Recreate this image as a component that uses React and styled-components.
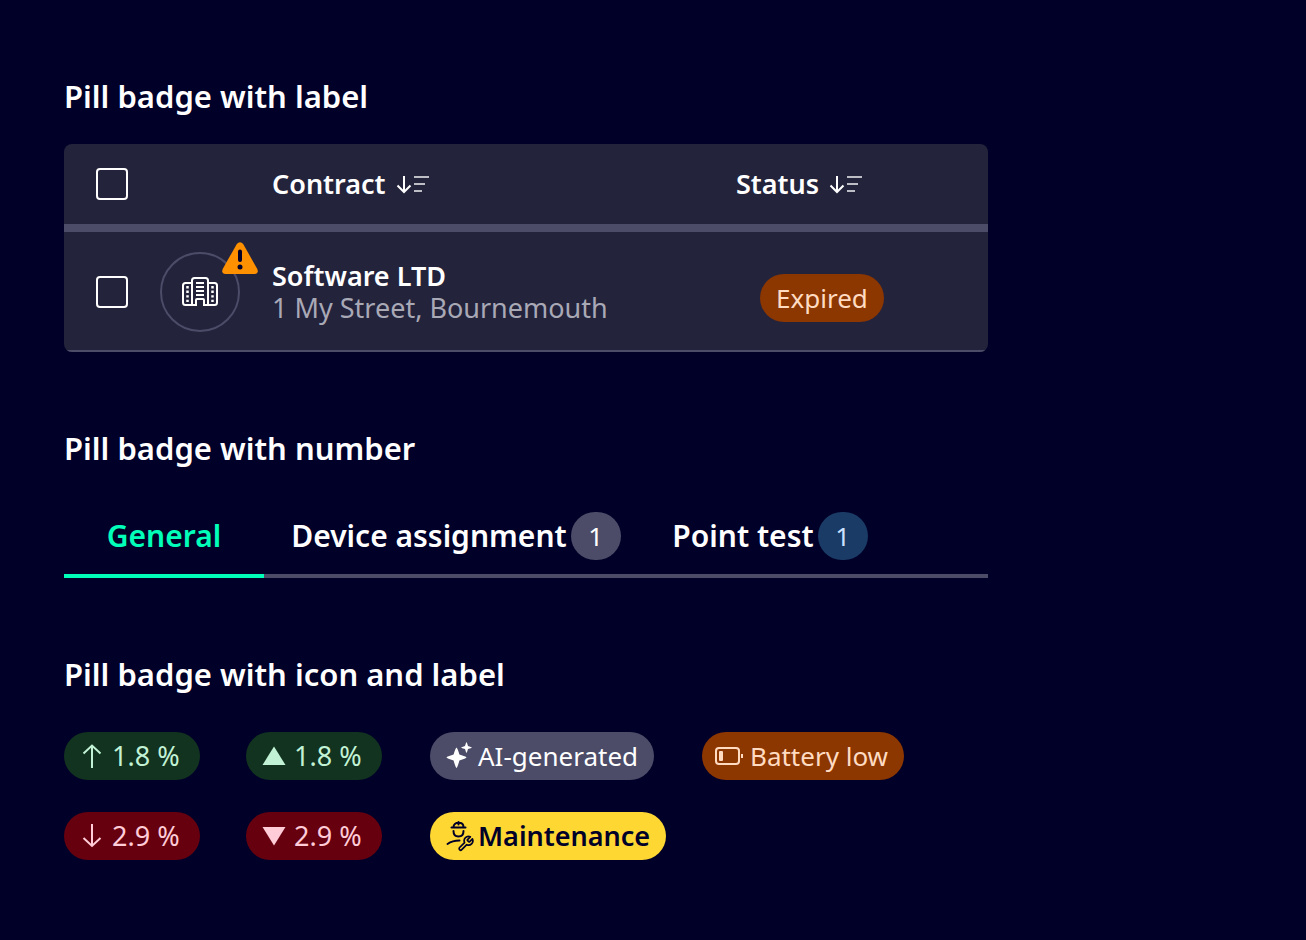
import React from "react";
import styled, { createGlobalStyle, css } from "styled-components";

const Global = createGlobalStyle`
  *, *::before, *::after { box-sizing: border-box; }
  body {
    margin: 0;
    background: #000028;
    color: #ffffff;
    font-family: "Noto Sans", "Open Sans", sans-serif;
    font-size: 27px;
    line-height: 32px;
  }
  button {
    font: inherit;
    color: inherit;
    background: none;
    border: 0;
    padding: 0;
    cursor: pointer;
  }
`;

const Page = styled.main`
  display: flex;
  flex-direction: column;
  gap: 76px;
  max-width: 1052px;
  padding: 76px 64px 80px;
`;

const Section = styled.section`
  display: flex;
  flex-direction: column;
  gap: ${(p) => p.$gap}px;
`;

const Heading = styled.h2`
  margin: 0;
  font-size: 31px;
  line-height: 40px;
  font-weight: 600;
`;

const Card = styled.div`
  background: #23233c;
  border-radius: 8px;
  overflow: hidden;
`;

const Table = styled.table`
  width: 100%;
  border-collapse: separate;
  border-spacing: 0;
  table-layout: fixed;
`;

const Col = styled.col`
  width: ${(p) => p.$width};
`;

const HeadCell = styled.th`
  height: 88px;
  padding: 0;
  border-bottom: 8px solid #4c4c68;
  text-align: left;
  font-weight: 600;
`;

const Cell = styled.td`
  height: 120px;
  padding: ${(p) => p.$pad || "2px 0 0"};
  border-bottom: 2px solid #4c4c68;
  vertical-align: middle;
`;

const Checkbox = styled.input.attrs({ type: "checkbox" })`
  appearance: none;
  display: block;
  width: 32px;
  height: 32px;
  margin: 0 0 0 32px;
  border: 2px solid #ffffff;
  border-radius: 4px;
  &:checked { background: #00ffb9; }
`;

const SortButton = styled.button`
  display: flex;
  align-items: center;
  gap: 10px;
`;

const Avatar = styled.div`
  position: relative;
  display: flex;
  align-items: center;
  justify-content: center;
  width: 80px;
  height: 80px;
  border: 2px solid #4c4c68;
  border-radius: 50%;
`;

const AlertMark = styled.span`
  position: absolute;
  top: -12px;
  right: -20px;
  display: flex;
`;

const Name = styled.div`
  font-weight: 600;
`;

const Address = styled.div`
  color: #a9a9b6;
`;

const tones = {
  warning: css`background: #8c3600; color: #ffdbc2;`,
  success: css`background: #12331f; color: #c2f2d6; font-size: 27px;`,
  danger: css`background: #66000f; color: #ffccd7; font-size: 27px;`,
  neutral: css`background: #4c4c68; color: #ffffff;`,
  info: css`background: #1a3b66; color: #cce0ff;`,
  caution: css`background: #ffd732; color: #000028; font-size: 27px; font-weight: 600;`,
};

const Pill = styled.span`
  display: inline-flex;
  align-items: center;
  height: 48px;
  padding: 0 16px;
  border-radius: 24px;
  font-size: 26px;
  font-weight: 400;
  white-space: nowrap;
  vertical-align: top;
  ${(p) => tones[p.$tone]}
`;

const IconPill = styled(Pill)`
  gap: 4px;
  min-width: 136px;
  padding-left: 12px;
`;

const CountPill = styled(Pill)`
  justify-content: center;
  width: 50px;
`;

const TabList = styled.div`
  display: flex;
  box-shadow: inset 0 -4px #4c4c68;
`;

const Tab = styled.button`
  display: flex;
  align-items: center;
  justify-content: center;
  gap: 4px;
  width: ${(p) => p.$width};
  height: 66px;
  padding-bottom: 14px;
  border-bottom: 4px solid ${(p) => (p["aria-selected"] ? "#00ffb9" : "transparent")};
  color: ${(p) => (p["aria-selected"] ? "#00ffb9" : "#ffffff")};
  font-size: 30px;
  line-height: 40px;
  font-weight: 600;
  white-space: nowrap;
`;

const PillGrid = styled.div`
  display: grid;
  grid-template-columns: 136px 138px 226px auto;
  gap: 32px 46px;
  justify-items: start;
  justify-content: start;
`;

const Icon = styled.svg.attrs({ "aria-hidden": true, fill: "none", stroke: "currentColor", strokeWidth: 2 })`
  flex: none;
  display: block;
`;

const SortIcon = () => (
  <Icon width="34" height="20" viewBox="0 0 34 20">
    <path d="M8 2V18M1.5 11.5L8 18L14.5 11.5" />
    <path opacity=".7" d="M18 3H33M18 10H29M18 17H26" />
  </Icon>
);

const BuildingIcon = () => (
  <Icon width="36" height="30" viewBox="0 1 36 30">
    <path d="M10 29V4.500Q10 2 12.500 2H23.500Q26 2 26 4.500V29H22V24Q22 23 21 23H15Q14 23 14 24V29Z" />
    <path d="M10 29H3.500Q1 29 1 26.500V9.500Q1 7 3.500 7H10M26 7H32.500Q35 7 35 9.500V26.500Q35 29 32.500 29H26" />
    <path d="M14 7H22M14 11H22M14 15H22M14 19H22" />
    <path strokeWidth="2.5" strokeDasharray="2.4 2.2" d="M5.500 10V26M30.500 10V26" />
  </Icon>
);

const WarningIcon = () => (
  <Icon width="36" height="32" viewBox="0 0 36 32">
    <path fill="#ff9000" stroke="none" d="M14.8 2Q18 -1.5 21.2 2L35.3 27Q37 31.5 32.5 32H3.5Q-1 31.5 0.7 27Z" />
    <path stroke="#000028" strokeWidth="4" strokeLinecap="round" d="M18 9.5V18" />
    <circle cx="18" cy="25" r="2.5" fill="#000028" stroke="none" />
  </Icon>
);

const ArrowIcon = ({ down }) => (
  <Icon width="32" height="32" viewBox="0 0 32 32">
    <path d={down ? "M16 4V26M7.5 18L16 26L24.5 18" : "M16 28V5.5M7.5 13.5L16 5.5L24.5 13.5"} />
  </Icon>
);

const TriangleIcon = ({ down }) => (
  <Icon width="32" height="32" viewBox="0 0 32 32">
    <path fill="currentColor" stroke="none" d={down ? "M4.5 7H27.5L16 25.5Z" : "M4.5 25H27.5L16 6.5Z"} />
  </Icon>
);

const SparkleIcon = () => (
  <Icon width="32" height="32" viewBox="0 0 32 32">
    <g fill="currentColor" stroke="none">
      <path d="M14.5 7.5Q15.5 8 17.4 14.6Q24 16.5 24.5 17.5Q24 18.5 17.4 20.4Q15.5 27.5 14.5 28Q13.5 27.5 11.6 20.4Q5 18.5 4.5 17.5Q5 16.5 11.6 14.6Q13.5 8 14.5 7.5Z" />
      <path d="M24.5 2Q25 2.5 26 6Q29.5 7 30 7.5Q29.5 8 26 9Q25 12.5 24.5 13Q24 12.5 23 9Q19.5 8 19 7.5Q19.5 7 23 6Q24 2.5 24.5 2Z" />
    </g>
  </Icon>
);

const BatteryIcon = () => (
  <Icon width="32" height="32" viewBox="0 0 32 32">
    <rect x="2" y="8" width="23" height="16" rx="3" />
    <rect x="5" y="11" width="4" height="10" rx="1" fill="currentColor" stroke="none" />
    <path d="M28 14V18" />
  </Icon>
);

const TechnicianIcon = () => (
  <Icon width="32" height="32" viewBox="0 0 32 32" strokeLinecap="round" strokeLinejoin="round">
    <path d="M9.5 7.5H23.5M11.5 7C11.5 4.5 13.5 2.8 16.5 2.8S21.5 4.5 21.5 7M16.5 2V4.5" />
    <path d="M11.5 11C11.5 14.5 13.5 16.5 16.5 16.5S21.5 14.5 21.5 11M5.5 24C9 21.5 13 20.5 17.5 20.5" />
    <path
      transform="translate(15 15) scale(.72)"
      strokeWidth="2.4"
      d="M14.7 6.3a1 1 0 0 0 0 1.4l1.6 1.6a1 1 0 0 0 1.4 0l3.77-3.77a6 6 0 0 1-7.94 7.94l-6.91 6.91a2.12 2.12 0 0 1-3-3l6.91-6.91a6 6 0 0 1 7.94-7.94l-3.76 3.76z"
    />
  </Icon>
);

export default function App() {
  return (
    <Page>
      <Global />
      <Section $gap={28}>
        <Heading>Pill badge with label</Heading>
        <Card>
          <Table>
            <colgroup>
              <Col $width="96px" />
              <Col $width="112px" />
              <Col $width="auto" />
              <Col $width="252px" />
            </colgroup>
            <thead>
              <tr>
                <HeadCell><Checkbox aria-label="Select all contracts" /></HeadCell>
                <HeadCell />
                <HeadCell><SortButton>Contract<SortIcon /></SortButton></HeadCell>
                <HeadCell><SortButton>Status<SortIcon /></SortButton></HeadCell>
              </tr>
            </thead>
            <tbody>
              <tr>
                <Cell><Checkbox aria-label="Select Software LTD" /></Cell>
                <Cell>
                  <Avatar>
                    <BuildingIcon />
                    <AlertMark><WarningIcon /></AlertMark>
                  </Avatar>
                </Cell>
                <Cell>
                  <Name>Software LTD</Name>
                  <Address>1 My Street, Bournemouth</Address>
                </Cell>
                <Cell $pad="14px 0 0 24px"><Pill $tone="warning">Expired</Pill></Cell>
              </tr>
            </tbody>
          </Table>
        </Card>
      </Section>

      <Section $gap={44}>
        <Heading>Pill badge with number</Heading>
        <TabList role="tablist">
          <Tab role="tab" aria-selected={true} $width="200px">General</Tab>
          <Tab role="tab" aria-selected={false} $width="384px">
            Device assignment<CountPill $tone="neutral">1</CountPill>
          </Tab>
          <Tab role="tab" aria-selected={false} $width="244px">
            Point test<CountPill $tone="info">1</CountPill>
          </Tab>
        </TabList>
      </Section>

      <Section $gap={38}>
        <Heading>Pill badge with icon and label</Heading>
        <PillGrid>
          <IconPill $tone="success"><ArrowIcon />1.8 %</IconPill>
          <IconPill $tone="success"><TriangleIcon />1.8 %</IconPill>
          <IconPill $tone="neutral"><SparkleIcon />AI-generated</IconPill>
          <IconPill $tone="warning"><BatteryIcon />Battery low</IconPill>
          <IconPill $tone="danger"><ArrowIcon down />2.9 %</IconPill>
          <IconPill $tone="danger"><TriangleIcon down />2.9 %</IconPill>
          <IconPill $tone="caution"><TechnicianIcon />Maintenance</IconPill>
        </PillGrid>
      </Section>
    </Page>
  );
}
